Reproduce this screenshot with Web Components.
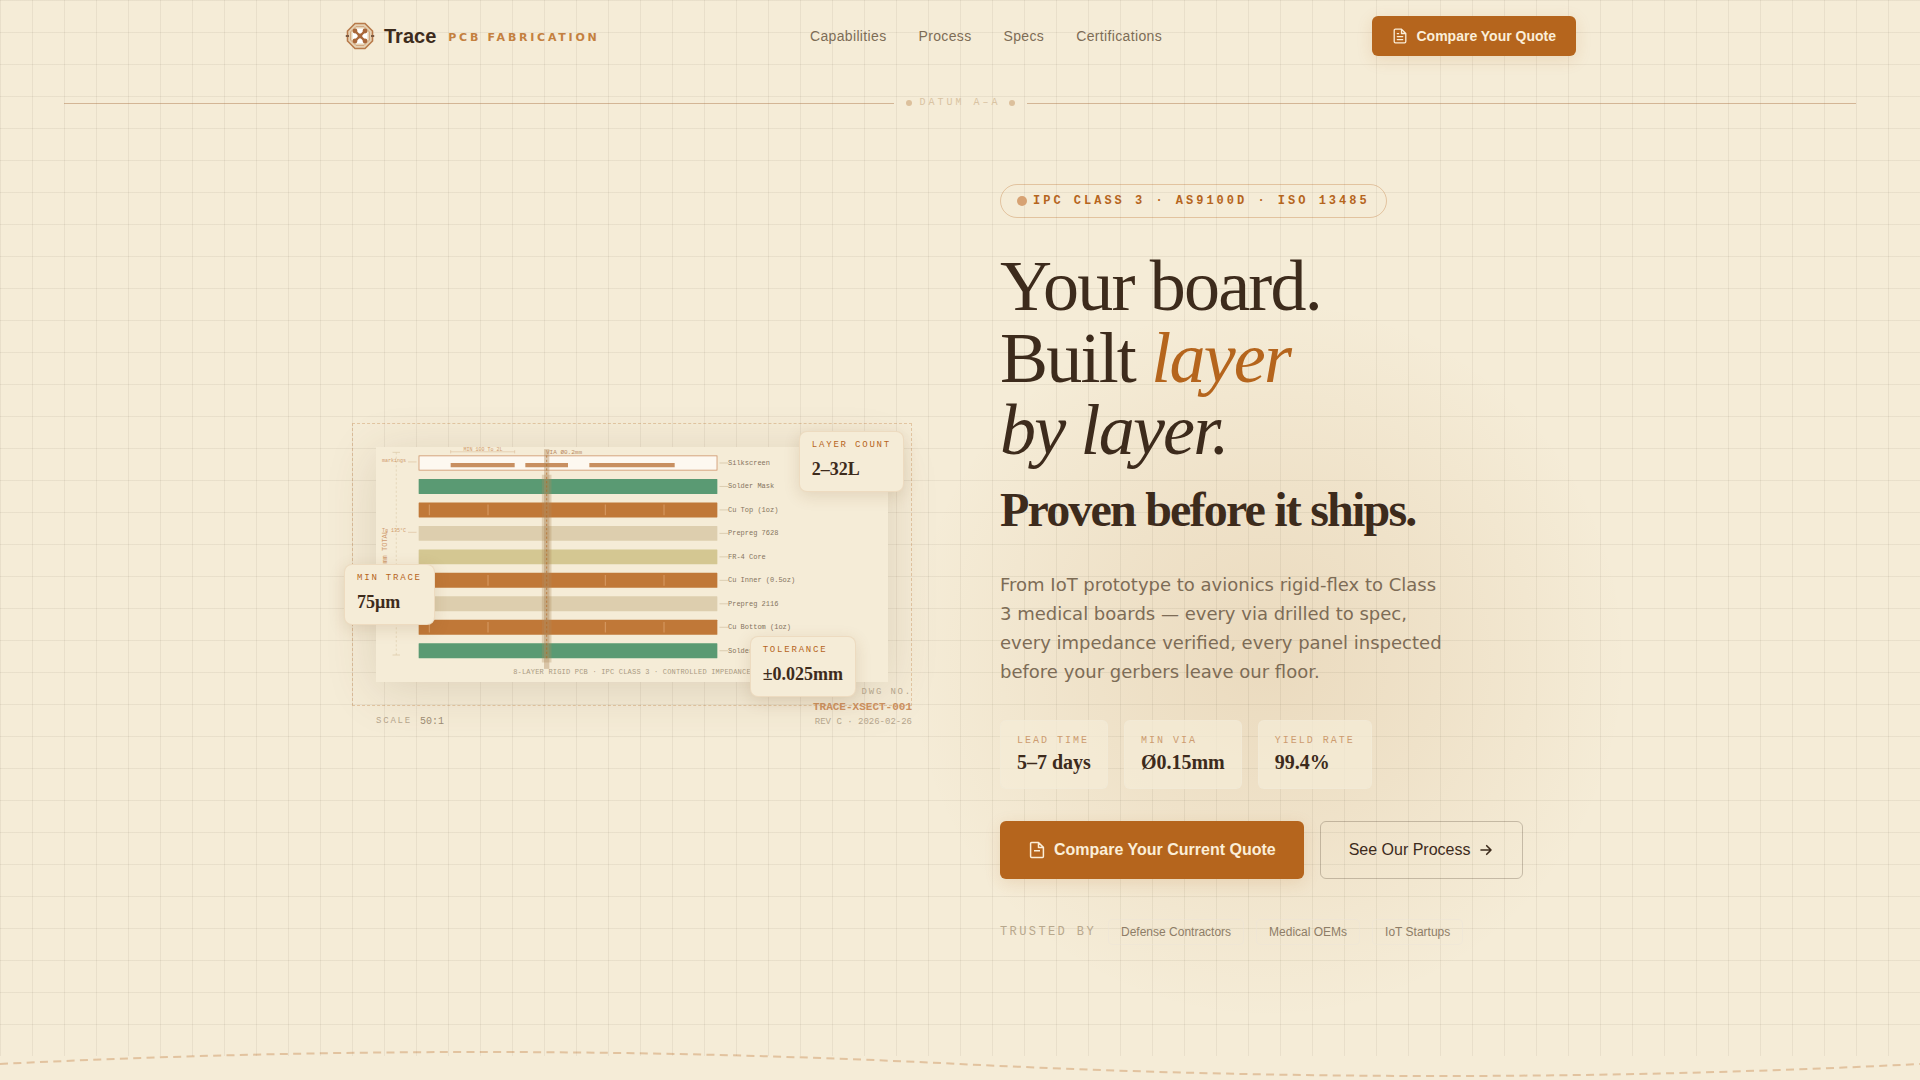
<!DOCTYPE html>
<html lang="en">
<head>
  <meta charset="UTF-8">
  <meta name="viewport" content="width=device-width, initial-scale=1.0">
  <title>Trace PCB Fabrication</title>
  <style>
    :root{
      --paper: #f5ecd7;
      --ink: #3d2b1c;
      --copper: #b5651d;
      --muted: #7d6c56;
      --sans: "Liberation Sans", Arial, sans-serif;
      --serif: "Liberation Serif", "Times New Roman", serif;
      --mono: "Liberation Mono", "Courier New", monospace;
      --body: "DejaVu Sans", sans-serif;
    }
    body{
      margin: 0;
      background-color: var(--paper);
      color: var(--ink);
      font-family: var(--sans);
    }
  </style>
</head>
<body>
  <template id="trace-page">
    <style>
      :host{
        display: flex;
        flex-direction: column;
        min-height: 100vh;
        position: relative;
        z-index: 0;
        overflow: hidden;
      }
      .glow, .grid{
        position: absolute;
        inset: 0;
        z-index: -1;
      }
      .glow{
        background: radial-gradient(circle 360px at 66% 61%, rgba(165, 100, 25, .13), rgba(165, 100, 25, .07) 50%, transparent);
      }
      .grid{
        bottom: 24px;
        background-image:
          linear-gradient(rgba(70, 60, 35, .07) 1px, transparent 1px),
          linear-gradient(90deg, rgba(70, 60, 35, .07) 1px, transparent 1px);
        background-size: 32px 32px;
      }
      main{
        display: grid;
        grid-template-columns: 1fr 1fr;
        align-items: center;
        gap: 80px;
        box-sizing: border-box;
        width: 100%;
        max-width: 1280px;
        margin: 0 auto;
        padding: 50px 24px 96px;
      }
      svg{
        display: block;
        width: 100%;
        margin-top: auto;
      }
    </style>
    <div class="glow"></div>
    <div class="grid"></div>
    <slot name="header"></slot>
    <main><slot></slot></main>
    <svg viewBox="0 0 1440 24" fill="none">
      <path d="M0 12Q360 -6 720 12T1440 12" stroke="#b5651d" stroke-opacity=".3" stroke-width="1.5" stroke-dasharray="6 4"/>
    </svg>
  </template>

  <template id="trace-header">
    <style>
      :host{
        display: flex;
        justify-content: space-between;
        align-items: center;
        box-sizing: border-box;
        width: 100%;
        max-width: 1280px;
        height: 72px;
        margin: 0 auto;
        padding: 0 24px;
      }
      .logo{
        display: flex;
        align-items: center;
        color: var(--ink);
        text-decoration: none;
      }
      .logo b{
        margin: 0 12px 0 8px;
        font-size: 20px;
        line-height: 28px;
      }
      .logo span{
        padding-top: 3px;
        color: #c4803f;
        font: bold 11px/16px var(--body);
        letter-spacing: .25em;
      }
      nav{
        display: flex;
        gap: 32px;
      }
    </style>
    <a class="logo" href="#">
      <svg width="32" height="32" viewBox="0 0 32 32" fill="none">
        <path d="M11 3.5H21L28.500 11V21L21 28.500H11L3.500 21V11Z" fill="#e6d2b4" stroke="#b87a4a" stroke-width="1.600"/>
        <path d="M12 6.500H20L25.500 12V20L20 25.500H12L6.500 20V12Z" stroke="#d3a780"/>
        <path d="M12.500 8.500H19.500L23.500 12.500V19.500L19.500 23.500H12.500L8.500 19.500V12.500Z" fill="#fff"/>
        <path d="M11 11L21 21M21 11L11 21" stroke="#a9673a" stroke-width="2.400"/>
        <g fill="#a9673a">
          <circle cx="11" cy="11" r="2.400"/><circle cx="21" cy="11" r="2.400"/>
          <circle cx="11" cy="21" r="2.400"/><circle cx="21" cy="21" r="2.400"/>
          <circle cx="16" cy="16" r="2.400"/>
        </g>
        <path d="M1.800 16H5M27 16H30.200" stroke="#7d5a40" stroke-width="2"/>
      </svg>
      <b>Trace</b>
      <span>PCB FABRICATION</span>
    </a>
    <nav><slot name="links"></slot></nav>
    <slot name="action"></slot>
  </template>

  <template id="nav-link">
    <style>
      :host{
        display: block;
      }
      a{
        color: var(--muted);
        font-size: 14px;
        line-height: 20px;
        letter-spacing: .025em;
        text-decoration: none;
      }
    </style>
    <a href="#"><slot></slot></a>
  </template>

  <template id="datum-line">
    <style>
      :host{
        display: flex;
        align-items: center;
        gap: 12px;
        height: 62px;
        padding: 0 64px;
      }
      .line{
        flex: 1;
        height: 1px;
        background-color: rgba(160, 100, 50, .4);
      }
      .mark{
        display: flex;
        align-items: center;
        gap: 8px;
        color: #d9c3a2;
        font: 10px/16px var(--mono);
        letter-spacing: 3px;
      }
      i{
        width: 6px;
        height: 6px;
        border-radius: 50%;
        background-color: #dcc09c;
      }
    </style>
    <div class="line"></div>
    <div class="mark"><i></i><span><slot></slot></span><i></i></div>
    <div class="line"></div>
  </template>

  <template id="action-button">
    <style>
      :host{
        display: block;
      }
      button{
        display: flex;
        align-items: center;
        gap: 8px;
        height: 40px;
        padding: 0 20px;
        border: 0;
        border-radius: 6px;
        background-color: var(--copper);
        box-shadow: 0 4px 16px rgba(181, 101, 29, .15);
        color: #fbeed8;
        font: bold 14px/20px var(--sans);
        cursor: pointer;
      }
      :host([large]) button{
        height: 58px;
        padding: 0 28px;
        font-size: 16px;
        line-height: 24px;
      }
      :host([outline]) button{
        border: 1px solid rgba(59, 42, 26, .25);
        background: none;
        box-shadow: none;
        color: var(--ink);
        font-weight: normal;
      }
    </style>
    <button type="button"><slot name="icon"></slot><slot></slot><slot name="after"></slot></button>
  </template>

  <template id="cross-section">
    <style>
      :host{
        display: block;
        position: relative;
        padding: 32px;
      }
      .frame{
        position: absolute;
        inset: 8px;
        border: 1px dashed rgba(181, 101, 29, .28);
      }
      .board{
        display: block;
        position: relative;
        width: 100%;
        background-color: var(--paper);
        box-shadow: 0 8px 48px rgba(100, 66, 30, .16);
        font-family: var(--mono);
      }
      .scale, .drawing{
        position: absolute;
        color: #b5a58c;
        font: 9px/15px var(--mono);
      }
      .scale{
        left: 32px;
        bottom: -15px;
        display: flex;
        gap: 8px;
      }
      .scale span, .drawing span{
        letter-spacing: .2em;
      }
      .scale b{
        color: #9c8b72;
        font-size: 10px;
        font-weight: normal;
      }
      .drawing{
        right: 8px;
        bottom: -16px;
        display: grid;
        justify-items: end;
      }
      .drawing b{
        color: #cb905f;
        font-size: 11px;
      }
      ::slotted(float-tag){
        position: absolute;
      }
      ::slotted([slot="top"]){
        top: 16px;
        right: 16px;
      }
      ::slotted([slot="left"]){
        top: 149px;
        left: 0;
      }
      ::slotted([slot="bottom"]){
        right: 64px;
        bottom: 17px;
      }
    </style>
    <div class="frame"></div>
    <svg class="board" viewBox="0 0 512 235">
      <g id="stack" transform="scale(1.0667)"></g>
      <g id="labels" font-size="7" fill="#85745e"></g>
      <g fill="#cf9a6c">
        <text x="107" y="4" font-size="5" text-anchor="middle">MIN 100 To 2L</text>
        <text x="170" y="7" font-size="6" fill="#b98a62">VIA Ø0.2mm</text>
        <text x="30" y="15" font-size="5" text-anchor="end">markings</text>
        <text x="30" y="85" font-size="5" text-anchor="end">Tg 135°C</text>
        <text transform="translate(11 83) rotate(-90)" font-size="7" text-anchor="end">1.6mm TOTAL</text>
      </g>
      <text x="256" y="227" font-size="7" fill="#aa9a82" letter-spacing=".2" text-anchor="middle">8-LAYER RIGID PCB · IPC CLASS 3 · CONTROLLED IMPEDANCE</text>
    </svg>
    <div class="scale"><span>SCALE</span><b>50:1</b></div>
    <div class="drawing"><span>DWG NO.</span><b>TRACE-XSECT-001</b><div>REV C · 2026-02-26</div></div>
    <slot name="top"></slot>
    <slot name="left"></slot>
    <slot name="bottom"></slot>
  </template>

  <template id="float-tag">
    <style>
      :host{
        display: block;
        padding: 7px 12px 8px;
        border: 1px solid rgba(181, 101, 29, .12);
        border-radius: 8px;
        background-color: var(--paper);
        box-shadow: 0 4px 16px rgba(120, 75, 30, .15);
        font: bold 18px/28px var(--serif);
        white-space: nowrap;
      }
      div{
        margin-bottom: 4px;
        color: var(--copper);
        font: 9px/12px var(--mono);
        letter-spacing: .2em;
      }
    </style>
    <div><slot name="label"></slot></div>
    <slot></slot>
  </template>

  <template id="hero-copy">
    <style>
      :host{
        display: block;
      }
      .chip{
        display: inline-flex;
        align-items: center;
        gap: 6px;
        padding: 0 16px;
        border: 1px solid rgba(181, 101, 29, .3);
        border-radius: 20px;
        color: var(--copper);
        font: bold 12px/32px var(--mono);
        letter-spacing: 3px;
        vertical-align: top;
      }
      .chip i{
        width: 10px;
        height: 10px;
        border-radius: 50%;
        background-color: #d7a273;
      }
      h1{
        margin: 32px 0 36px;
        font: 72px/72px var(--serif);
        letter-spacing: -.025em;
      }
      h1 span{
        color: var(--copper);
      }
      h1 strong{
        display: block;
        margin-top: 20px;
        font-size: 48px;
        line-height: 48px;
        letter-spacing: -.0375em;
      }
      p{
        max-width: 448px;
        margin: 0 0 34px;
        color: var(--muted);
        font: 18px/29px var(--body);
      }
      .row{
        display: flex;
        align-items: center;
        gap: 16px;
        margin-bottom: 32px;
      }
      .trusted{
        gap: 12px;
        margin: 40px 0 0;
        color: #b8a88d;
        font: 12px/24px var(--mono);
        letter-spacing: .2em;
      }
    </style>
    <div class="chip"><i></i><span>IPC CLASS 3 · AS9100D · ISO 13485</span></div>
    <h1>Your board.<br>Built <em><span>layer</span><br>by layer.</em><strong>Proven before it ships.</strong></h1>
    <p>From IoT prototype to avionics rigid-flex to Class 3 medical boards — every via drilled to spec, every impedance verified, every panel inspected before your gerbers leave our floor.</p>
    <div class="row"><slot name="stats"></slot></div>
    <div class="row"><slot name="actions"></slot></div>
    <div class="row trusted"><span>TRUSTED BY</span><slot name="clients"></slot></div>
  </template>

  <template id="stat-card">
    <style>
      :host{
        display: block;
        padding: 12px 16px;
        border: 1px solid rgba(240, 234, 218, .5);
        border-radius: 6px;
        background-color: rgba(245, 236, 215, .7);
        font: bold 20px/28px var(--serif);
      }
      div{
        color: #cd9c70;
        font: 10px/15px var(--mono);
        letter-spacing: .2em;
      }
    </style>
    <div><slot name="label"></slot></div>
    <slot></slot>
  </template>

  <template id="client-tag">
    <style>
      :host{
        display: block;
        padding: 0 12px;
        border: 1px solid rgba(235, 228, 218, .4);
        border-radius: 4px;
        color: #8e7d67;
        font: 12px/24px var(--sans);
        letter-spacing: normal;
      }
    </style>
    <slot></slot>
  </template>

  <trace-page>
    <trace-header slot="header">
      <nav-link slot="links">Capabilities</nav-link>
      <nav-link slot="links">Process</nav-link>
      <nav-link slot="links">Specs</nav-link>
      <nav-link slot="links">Certifications</nav-link>
      <action-button slot="action">
        <svg slot="icon" width="16" height="16" viewBox="0 0 16 16" fill="none" stroke="currentColor" stroke-width="1.300" stroke-linejoin="round" stroke-linecap="round">
          <path d="M9.500 1.200H3.400A1.200 1.200 0 0 0 2.200 2.400V13.600A1.200 1.200 0 0 0 3.400 14.800H12.600A1.200 1.200 0 0 0 13.800 13.600V5.500ZM9.500 1.200V5.500H13.800M5.300 5.600H6.600M5.300 8.600H10.700M5.300 11.600H10.700"/>
        </svg>Compare Your Quote</action-button>
    </trace-header>
    <datum-line slot="header">DATUM A–A</datum-line>
    <cross-section>
      <float-tag slot="top"><span slot="label">LAYER COUNT</span>2–32L</float-tag>
      <float-tag slot="left"><span slot="label">MIN TRACE</span>75μm</float-tag>
      <float-tag slot="bottom"><span slot="label">TOLERANCE</span>±0.025mm</float-tag>
    </cross-section>
    <hero-copy>
      <stat-card slot="stats"><span slot="label">LEAD TIME</span>5–7 days</stat-card>
      <stat-card slot="stats"><span slot="label">MIN VIA</span>Ø0.15mm</stat-card>
      <stat-card slot="stats"><span slot="label">YIELD RATE</span>99.4%</stat-card>
      <action-button slot="actions" large>
        <svg slot="icon" width="18" height="18" viewBox="0 0 18 18" fill="none" stroke="currentColor" stroke-width="1.500" stroke-linejoin="round">
          <path d="M10.500 1.500H3.600A1 1 0 0 0 2.600 2.500V15.500A1 1 0 0 0 3.600 16.500H14.400A1 1 0 0 0 15.400 15.500V6.400ZM10.500 1.500V6.400H15.400M6 9.700H12"/>
        </svg>Compare Your Current Quote</action-button>
      <action-button slot="actions" large outline>See Our Process<svg slot="after" width="16" height="16" viewBox="0 0 16 16" fill="none" stroke="currentColor" stroke-width="1.600" stroke-linecap="round" stroke-linejoin="round">
          <path d="M3 8H13M8.700 3.700L13 8L8.700 12.300"/>
        </svg></action-button>
      <client-tag slot="clients">Defense Contractors</client-tag>
      <client-tag slot="clients">Medical OEMs</client-tag>
      <client-tag slot="clients">IoT Startups</client-tag>
    </hero-copy>
  </trace-page>

  <script>
    class TemplateElement extends HTMLElement {
      constructor() {
        super()
        const shadowRoot = this.attachShadow({ mode: 'open' })
        const template = document.querySelector('template#' + this.localName)
        shadowRoot.appendChild(template.content.cloneNode(true))
      }
    }

    const layers = [
      ['Silkscreen', '#fdf8f0'],
      ['Solder Mask', '#5a9a73'],
      ['Cu Top (1oz)', '#c07838'],
      ['Prepreg 7628', '#ddceae'],
      ['FR-4 Core', '#d4c792'],
      ['Cu Inner (0.5oz)', '#c07838'],
      ['Prepreg 2116', '#ddceae'],
      ['Cu Bottom (1oz)', '#c07838'],
      ['Solder Mask', '#5a9a73']
    ]

    class CrossSection extends TemplateElement {
      constructor() {
        super()
        let shapes = ''
        let labels = ''
        layers.forEach(([name, color], i) => {
          const y = 8 + i * 22
          shapes += `<rect x="40" y="${y}" width="280" height="14" rx=".5" fill="${color}"/>`
          shapes += `<path d="M322 ${y + 7}h8" stroke="#cdbb9c" stroke-width=".6"/>`
          if (color === '#c07838') {
            shapes += `<path d="M50 ${y + 2}v10M105 ${y + 2}v10M215 ${y + 2}v10M270 ${y + 2}v10" stroke="#d69a63"/>`
          }
          labels += `<text x="352" y="${Math.round((y + 7) * 1.0667 + 2)}">${name}</text>`
        })
        // silkscreen outline and legend marks
        shapes += '<rect x="40.300" y="8.300" width="279.400" height="13.400" fill="none" stroke="#c98a5a" stroke-width=".7"/>'
        shapes += '<path d="M70 17h60M140 17h40M200 17h80" stroke="#c88f60" stroke-width="4"/>'
        // plated via
        shapes += '<rect x="155.500" y="26" width="9" height="176" fill="#b08a5c" opacity=".3"/>'
        shapes += '<rect x="157.500" y="2" width="5" height="206" fill="#b08a5c" opacity=".4"/>'
        shapes += '<path d="M160 8v190" stroke="#b5651d" stroke-width=".9" stroke-dasharray="2 2" opacity=".7"/>'
        // dimension lines
        shapes += '<path d="M70 4.500h60M70 3v3M130 3v3M30 14h8M30 80h8" stroke="#d9b791" stroke-width=".5"/>'
        shapes += '<path d="M15.500 5h7M15.500 195h7" stroke="#d9c3a2" stroke-width=".6"/>'
        shapes += '<path d="M19 5v190" stroke="#dccbaa" stroke-width=".6" stroke-dasharray="2 2"/>'
        this.shadowRoot.querySelector('#stack').innerHTML = shapes
        this.shadowRoot.querySelector('#labels').innerHTML = labels
      }
    }

    customElements.define('cross-section', CrossSection)
    const names = ['trace-page', 'trace-header', 'nav-link', 'datum-line', 'action-button', 'float-tag', 'hero-copy', 'stat-card', 'client-tag']
    names.forEach((name) => {
      customElements.define(name, class extends TemplateElement {})
    })
  </script>
</body>
</html>
